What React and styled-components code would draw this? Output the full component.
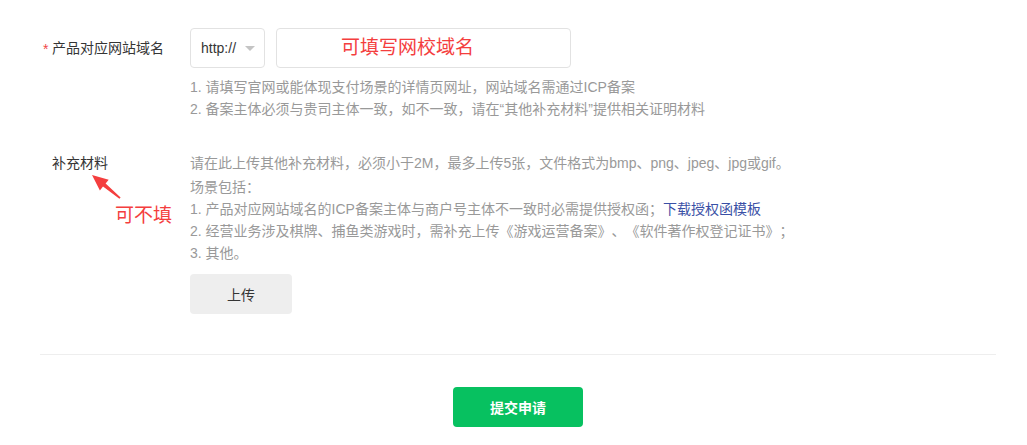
import styled, { createGlobalStyle } from "styled-components";

const GlobalStyle = createGlobalStyle`
    body {
        margin: 0;
        background: #fff;
        font-family: "Liberation Sans", "Noto Sans CJK SC", sans-serif;
        font-size: 14px;
        color: #353535;
        text-spacing-trim: space-all;
    }
`;

const Page = styled.div`
    padding: 28px 31px 0 40px;
`;

const Row = styled.div`
    display: grid;
    grid-template-columns: 138px 1fr;
    padding-left: 12px;
    margin-bottom: ${(p) => p.$gap || 0}px;
`;

const Label = styled.div`
    position: relative;
    height: ${(p) => p.$h || 22}px;
    line-height: ${(p) => p.$h || 22}px;
    color: #353535;
    &::before {
        content: ${(p) => (p.$required ? '"*"' : "none")};
        color: #f04848;
        position: absolute;
        left: -9px;
        top: 1px;
    }
`;

const Controls = styled.div`
    display: flex;
    gap: 11px;
`;

const Select = styled.div`
    width: 75px;
    height: 40px;
    box-sizing: border-box;
    border: 1px solid #e2e2e2;
    border-radius: 4px;
    display: flex;
    align-items: center;
    padding-left: 10px;
    gap: 9px;
    color: #353535;
`;

const Caret = styled.span`
    width: 0;
    height: 0;
    border-left: 5px solid transparent;
    border-right: 5px solid transparent;
    border-top: 5px solid #c4c4c4;
`;

const InputBox = styled.div`
    position: relative;
    width: 295px;
    height: 40px;
    box-sizing: border-box;
    border: 1px solid #e2e2e2;
    border-radius: 4px;
`;

const Input = styled.input`
    width: 100%;
    height: 100%;
    border: none;
    background: transparent;
    outline: none;
`;

const Note = styled.span`
    position: absolute;
    left: ${(p) => p.$left}px;
    top: ${(p) => p.$top}px;
    font-size: 19px;
    line-height: 24px;
    color: #f43e3e;
    white-space: nowrap;
`;

const Hints = styled.div`
    margin-top: ${(p) => p.$top || 0}px;
    color: #999;
    line-height: 22px;
`;

const Line = styled.div`
    margin-bottom: ${(p) => p.$mb || 0}px;
`;

const Link = styled.a`
    color: #3a50a6;
    text-decoration: none;
`;

const Arrow = styled.svg`
    position: absolute;
    left: 36px;
    top: 19px;
`;

const UploadButton = styled.button`
    margin-top: 10px;
    width: 102px;
    height: 40px;
    border: none;
    border-radius: 4px;
    background: #eeeeee;
    color: #353535;
    font-family: inherit;
    font-size: 14px;
`;

const Divider = styled.hr`
    margin: 40px 0 32px;
    border: none;
    border-top: 1px solid #eeeeee;
`;

const Footer = styled.div`
    display: flex;
    justify-content: center;
`;

const SubmitButton = styled.button`
    width: 130px;
    height: 40px;
    border: none;
    border-radius: 4px;
    background: #07c160;
    color: #fff;
    font-family: inherit;
    font-size: 14px;
    font-weight: bold;
`;

const App = () => {
    return (
        <Page>
            <GlobalStyle />
            <Row $gap={32}>
                <Label $required $h={40}>产品对应网站域名</Label>
                <div>
                    <Controls>
                        <Select>
                            http://
                            <Caret />
                        </Select>
                        <InputBox>
                            <Input />
                            <Note $left={64} $top={7}>可填写网校域名</Note>
                        </InputBox>
                    </Controls>
                    <Hints $top={8}>
                        <Line>1. 请填写官网或能体现支付场景的详情页网址，网站域名需通过ICP备案</Line>
                        <Line>2. 备案主体必须与贵司主体一致，如不一致，请在“其他补充材料”提供相关证明材料</Line>
                    </Hints>
                </div>
            </Row>
            <Row>
                <Label>
                    补充材料
                    <Arrow width="36" height="32" viewBox="0 0 36 32">
                        <polygon
                            points="4,4 20.7,8.7 17.6,12.6 32.6,26.4 31.4,27.8 15,15.6 11.9,19.5"
                            fill="#f43e3e"
                        />
                    </Arrow>
                    <Note $left={63} $top={52}>可不填</Note>
                </Label>
                <div>
                    <Hints>
                        <Line $mb={2}>请在此上传其他补充材料，必须小于2M，最多上传5张，文件格式为bmp、png、jpeg、jpg或gif。</Line>
                        <Line>场景包括：</Line>
                        <Line>
                            1. 产品对应网站域名的ICP备案主体与商户号主体不一致时必需提供授权函；<Link href="#">下载授权函模板</Link>
                        </Line>
                        <Line>2. 经营业务涉及棋牌、捕鱼类游戏时，需补充上传《游戏运营备案》、《软件著作权登记证书》；</Line>
                        <Line>3. 其他。</Line>
                    </Hints>
                    <UploadButton>上传</UploadButton>
                </div>
            </Row>
            <Divider />
            <Footer>
                <SubmitButton>提交申请</SubmitButton>
            </Footer>
        </Page>
    );
};

export default App;
